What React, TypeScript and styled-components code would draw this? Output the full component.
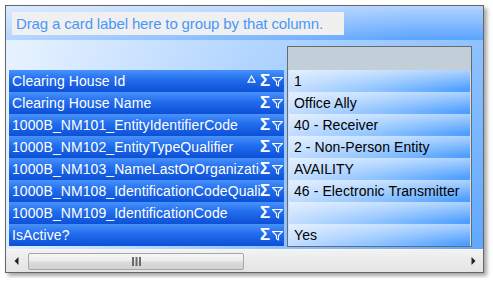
import React from "react";
import styled, { createGlobalStyle } from "styled-components";

const GlobalStyle = createGlobalStyle`
  html, body { margin: 0; padding: 0; background: #ffffff; }
  body { font-family: "Liberation Sans", Arial, sans-serif; }
  * { box-sizing: border-box; }
`;

const Page = styled.div`
  padding: 5px;
`;

const Frame = styled.div`
  width: 479px;
  height: 268px;
  border: 1px solid #656565;
  box-shadow: 3px 3px 4px rgba(0, 0, 0, 0.35);
  display: flex;
  flex-direction: column;
  overflow: hidden;
`;

const GroupBand = styled.div`
  height: 34px;
  padding: 6px 0 0 6px;
  flex: none;
  background:
    linear-gradient(to right, rgba(255, 255, 255, 0.55), rgba(255, 255, 255, 0) 85%),
    linear-gradient(to bottom, #b2d3ff, #5aa4ff);
`;

const GroupBox = styled.div`
  width: 332px;
  height: 23px;
  background: #f0f0f0;
  color: #4897fa;
  font-size: 15px;
  letter-spacing: -0.14px;
  line-height: 23px;
  padding-left: 4px;
  white-space: nowrap;
`;

const Body = styled.div`
  height: 209px;
  flex: none;
  display: flex;
  align-items: flex-start;
  gap: 3px;
  padding: 6px 0 0 3px;
  background:
    linear-gradient(to right, rgba(255, 255, 255, 0.8), rgba(255, 255, 255, 0.35) 50%, rgba(255, 255, 255, 0) 100%),
    linear-gradient(to bottom, #8ec2ff, #5ea8ff);
`;

const LabelColumn = styled.div`
  margin-top: 24px;
  width: 275px;
  display: flex;
  flex-direction: column;
`;

const LabelRow = styled.div`
  height: 22px;
  display: flex;
  align-items: center;
  padding-left: 3px;
  color: #ffffff;
  font-size: 14px;
  letter-spacing: 0.08px;
  background: linear-gradient(to bottom, #4892fb 0%, #216cec 45%, #0c50d6 100%);
`;

const LabelText = styled.span`
  flex: 1;
  min-width: 0;
  overflow: hidden;
  white-space: nowrap;
  line-height: 22px;
`;

const IconGroup = styled.span`
  display: flex;
  align-items: center;
  gap: 2px;
  padding-right: 1px;
  height: 22px;
`;

const SortMark = styled.svg`
  width: 9px;
  height: 8px;
  margin-right: 2px;
  margin-top: -4px;
`;

const Sigma = styled.span`
  font-family: "Liberation Sans", Arial, sans-serif;
  font-weight: bold;
  font-size: 17px;
  line-height: 22px;
  width: 10px;
  text-align: center;
`;

const Funnel = styled.svg`
  width: 11px;
  height: 11px;
`;

const Card = styled.div`
  width: 185px;
  height: 201px;
  border: 1px solid #6a6a6a;
  background: #cfe0f3;
  display: flex;
  flex-direction: column;
`;

const CardHeader = styled.div`
  height: 23px;
  flex: none;
  background: #c2ced8;
`;

const CardRows = styled.div`
  display: flex;
  flex-direction: column;
  padding: 0 1px;
`;

const CardRow = styled.div`
  height: 22px;
  display: flex;
  align-items: center;
  padding-left: 5px;
  color: #000000;
  font-size: 14px;
  letter-spacing: 0.08px;
  white-space: nowrap;
  background:
    linear-gradient(to bottom, rgba(255, 255, 255, 0.55), rgba(255, 255, 255, 0) 90%),
    linear-gradient(to right, #c4deff 0%, #8cc2ff 50%, #4a9cff 100%);
`;

const ScrollBar = styled.div`
  height: 23px;
  flex: none;
  display: flex;
  align-items: center;
  border-top: 1px solid #f8f8f8;
  background: linear-gradient(to bottom, #f2f2f2, #e4e4e4);
`;

const Arrow = styled.div<{ $w: number }>`
  width: ${(p) => p.$w}px;
  height: 22px;
  flex: none;
  display: flex;
  align-items: center;
  justify-content: center;
`;

const Track = styled.div`
  flex: 1;
  height: 22px;
  display: flex;
  align-items: center;
`;

const Thumb = styled.div`
  width: 216px;
  height: 17px;
  margin-left: 1px;
  border: 1px solid #a6a6a6;
  border-radius: 2px;
  background: linear-gradient(to bottom, #f6f6f6 0%, #ececec 45%, #dadada 55%, #d2d2d2 100%);
  display: flex;
  align-items: center;
  justify-content: center;
`;

const Grip = styled.svg`
  width: 9px;
  height: 9px;
`;

const SortIcon = () => (
  <SortMark viewBox="0 0 9 8">
    <polygon points="4.5,1 8,7.2 1,7.2" fill="none" stroke="#ffffff" strokeWidth="1.2" />
  </SortMark>
);

const FilterIcon = () => (
  <Funnel viewBox="0 0 11 11">
    <path
      d="M0.5 1.5 H10.5 L6.5 5.5 V10 L4.5 8.8 V5.5 Z"
      fill="none"
      stroke="#ffffff"
      strokeWidth="1.1"
      strokeLinejoin="round"
    />
  </Funnel>
);

const rows: { label: string; value: string; sorted?: boolean }[] = [
  { label: "Clearing House Id", value: "1", sorted: true },
  { label: "Clearing House Name", value: "Office Ally" },
  { label: "1000B_NM101_EntityIdentifierCode", value: "40 - Receiver" },
  { label: "1000B_NM102_EntityTypeQualifier", value: "2 - Non-Person Entity" },
  { label: "1000B_NM103_NameLastOrOrganizationName", value: "AVAILITY" },
  { label: "1000B_NM108_IdentificationCodeQualifier", value: "46 - Electronic Transmitter" },
  { label: "1000B_NM109_IdentificationCode", value: "" },
  { label: "IsActive?", value: "Yes" },
];

export default function App() {
  return (
    <>
      <GlobalStyle />
      <Page>
        <Frame>
          <GroupBand>
            <GroupBox>Drag a card label here to group by that column.</GroupBox>
          </GroupBand>
          <Body>
            <LabelColumn>
              {rows.map((r) => (
                <LabelRow key={r.label}>
                  <LabelText>{r.label}</LabelText>
                  <IconGroup>
                    {r.sorted && <SortIcon />}
                    <Sigma>Σ</Sigma>
                    <FilterIcon />
                  </IconGroup>
                </LabelRow>
              ))}
            </LabelColumn>
            <Card>
              <CardHeader />
              <CardRows>
                {rows.map((r) => (
                  <CardRow key={r.label}>{r.value}</CardRow>
                ))}
              </CardRows>
            </Card>
          </Body>
          <ScrollBar>
            <Arrow $w={21}>
              <svg width="5" height="8" viewBox="0 0 5 8">
                <polygon points="4.5,0 4.5,8 0.5,4" fill="#222" />
              </svg>
            </Arrow>
            <Track>
              <Thumb>
                <Grip viewBox="0 0 9 9">
                  <rect x="0" y="0" width="2" height="9" fill="#6a6a6a" />
                  <rect x="3.5" y="0" width="2" height="9" fill="#6a6a6a" />
                  <rect x="7" y="0" width="2" height="9" fill="#6a6a6a" />
                </Grip>
              </Thumb>
            </Track>
            <Arrow $w={20}>
              <svg width="5" height="8" viewBox="0 0 5 8">
                <polygon points="0.5,0 0.5,8 4.5,4" fill="#222" />
              </svg>
            </Arrow>
          </ScrollBar>
        </Frame>
      </Page>
    </>
  );
}
